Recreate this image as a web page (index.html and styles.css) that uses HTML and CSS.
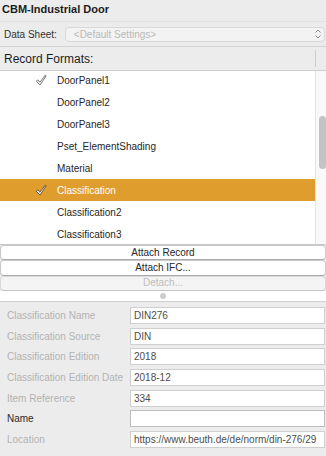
FILE: index.html
```html
<!DOCTYPE html>
<html lang="en">
<head>
    <meta charset="UTF-8" />
    <title>CBM-Industrial Door</title>
    <link rel="stylesheet" href="styles.css">
</head>
<body>
<div class="panel">
    <div class="title">CBM-Industrial Door</div>

    <div class="sheet-row">
        <span class="sheet-label">Data Sheet:</span>
        <div class="select">
            <span class="placeholder">&lt;Default Settings&gt;</span>
            <svg class="stepper" viewBox="0 0 8 12" width="8" height="12">
                <path d="M1.5 4.5 L4 2 L6.5 4.5" fill="none" stroke="#8a8a8a" stroke-width="1"/>
                <path d="M1.5 7.5 L4 10 L6.5 7.5" fill="none" stroke="#8a8a8a" stroke-width="1"/>
            </svg>
        </div>
    </div>

    <div class="formats-head">
        <span class="formats-label">Record Formats:</span>
        <span class="head-divider"></span>
    </div>

    <div class="list">
        <div class="rows">
            <div class="row">
                <span class="check">
                    <svg viewBox="0 0 12 12" width="12" height="12"><path d="M1.2 7.2 L2.9 5.9 L4.9 8.3 L10.3 1 L11.2 1.7 L5.1 11 Z" fill="#fff" stroke="#6a6a6a" stroke-width="0.9" stroke-linejoin="round"/></svg>
                </span>
                <span>DoorPanel1</span>
            </div>
            <div class="row"><span class="check"></span><span>DoorPanel2</span></div>
            <div class="row"><span class="check"></span><span>DoorPanel3</span></div>
            <div class="row"><span class="check"></span><span>Pset_ElementShading</span></div>
            <div class="row"><span class="check"></span><span>Material</span></div>
            <div class="row selected">
                <span class="check">
                    <svg viewBox="0 0 12 12" width="12" height="12"><path d="M1.2 7.2 L2.9 5.9 L4.9 8.3 L10.3 1 L11.2 1.7 L5.1 11 Z" fill="#fff" stroke="#5a4a30" stroke-width="0.9" stroke-linejoin="round"/></svg>
                </span>
                <span>Classification</span>
            </div>
            <div class="row"><span class="check"></span><span>Classification2</span></div>
            <div class="row"><span class="check"></span><span>Classification3</span></div>
        </div>
        <div class="scrollbar">
            <div class="thumb"></div>
        </div>
    </div>

    <div class="actions">
        <button class="action" type="button">Attach Record</button>
        <button class="action" type="button">Attach IFC...</button>
        <button class="action disabled" type="button">Detach...</button>
    </div>

    <div class="splitter"><span class="grip"></span></div>

    <div class="fields">
        <span class="field-label">Classification Name</span>
        <div class="field">DIN276</div>
        <span class="field-label">Classification Source</span>
        <div class="field">DIN</div>
        <span class="field-label">Classification Edition</span>
        <div class="field">2018</div>
        <span class="field-label">Classification Edition Date</span>
        <div class="field">2018-12</div>
        <span class="field-label">Item Reference</span>
        <div class="field">334</div>
        <span class="field-label active">Name</span>
        <div class="field empty"></div>
        <span class="field-label">Location</span>
        <div class="field">https://www.beuth.de/de/norm/din-276/29</div>
    </div>
</div>
</body>
</html>
```

FILE: styles.css
```css
body {
    margin: 0;
    background: #ececec;
    font-family: 'Liberation Sans', Arial, sans-serif;
    font-size: 10px;
    color: #222;
    overflow: hidden;
}
.panel {
    width: 326px;
    height: 456px;
    overflow: hidden;
}
.title {
    height: 21px;
    line-height: 19px;
    padding-left: 2px;
    font-size: 11px;
    font-weight: bold;
    color: #1c1c1c;
    border-bottom: 1px solid #e2e2e2;
}
.sheet-row {
    height: 24px;
    display: flex;
    align-items: center;
    padding: 0 1px 0 4px;
    gap: 8px;
    border-bottom: 1px solid #d2d2d2;
}
.sheet-label {
    color: #333;
}
.select {
    flex: 1;
    height: 13px;
    border: 1px solid #d8d8d8;
    border-radius: 4px;
    background: #f3f3f3;
    display: flex;
    align-items: center;
    padding-left: 8px;
    padding-right: 2px;
}
.placeholder {
    flex: 1;
    color: #b9b9b9;
}
.formats-head {
    height: 23px;
    display: flex;
    align-items: center;
    padding-left: 4px;
    border-bottom: 1px solid #cdcdcd;
}
.formats-label {
    flex: 1;
    font-size: 12px;
    color: #1c1c1c;
}
.head-divider {
    width: 10px;
    height: 17px;
    border-left: 1px solid #cfcfcf;
}
.list {
    height: 173px;
    display: flex;
    border-bottom: 1px solid #c8c8c8;
}
.rows {
    flex: 1;
    background: #fff;
    overflow: hidden;
}
.rows .row:first-child {
    margin-top: -2px;
}
.row {
    height: 22px;
    display: flex;
    align-items: center;
    padding-left: 35px;
    color: #262626;
}
.row.selected {
    background: #df9d2e;
    color: #fff;
}
.check {
    width: 22px;
    display: flex;
    align-items: center;
}
.scrollbar {
    width: 10px;
    background: #f9f9f9;
    border-left: 1px solid #e4e4e4;
}
.thumb {
    width: 7px;
    height: 53px;
    margin: 45px 0 0 3px;
    border-radius: 3.5px;
    background: #c3c3c3;
}
.actions {
    display: flex;
    flex-direction: column;
}
.action {
    height: 15.3px;
    margin: 0;
    padding: 0;
    border: 1px solid #c9c9c9;
    border-bottom-color: #ababab;
    border-radius: 4px;
    background: #fff;
    font-family: 'Liberation Sans', Arial, sans-serif;
    font-size: 10px;
    line-height: 12px;
    color: #262626;
}
.action.disabled {
    background: #f4f4f4;
    color: #bdbdbd;
    border-color: #d8d8d8;
    border-bottom-color: #c4c4c4;
}
.splitter {
    height: 10px;
    background: #fff;
    border-bottom: 1px solid #d0d0d0;
    display: flex;
    align-items: center;
    justify-content: center;
}
.grip {
    width: 6px;
    height: 6px;
    border-radius: 50%;
    background: #cdcdcd;
}
.fields {
    display: grid;
    grid-template-columns: 123px 1fr;
    grid-auto-rows: 17px;
    row-gap: 3.67px;
    padding: 5px 1px 0 7px;
}
.field-label {
    display: flex;
    align-items: center;
    color: #b3b3b3;
    white-space: nowrap;
}
.field-label.active {
    color: #2a2a2a;
}
.field {
    border: 1px solid #cfcfcf;
    background: #fff;
    padding: 0 3px;
    line-height: 15px;
    color: #4d4d4d;
    white-space: nowrap;
    overflow: hidden;
}
.field.empty {
    border-color: #bdbdbd;
}
```
